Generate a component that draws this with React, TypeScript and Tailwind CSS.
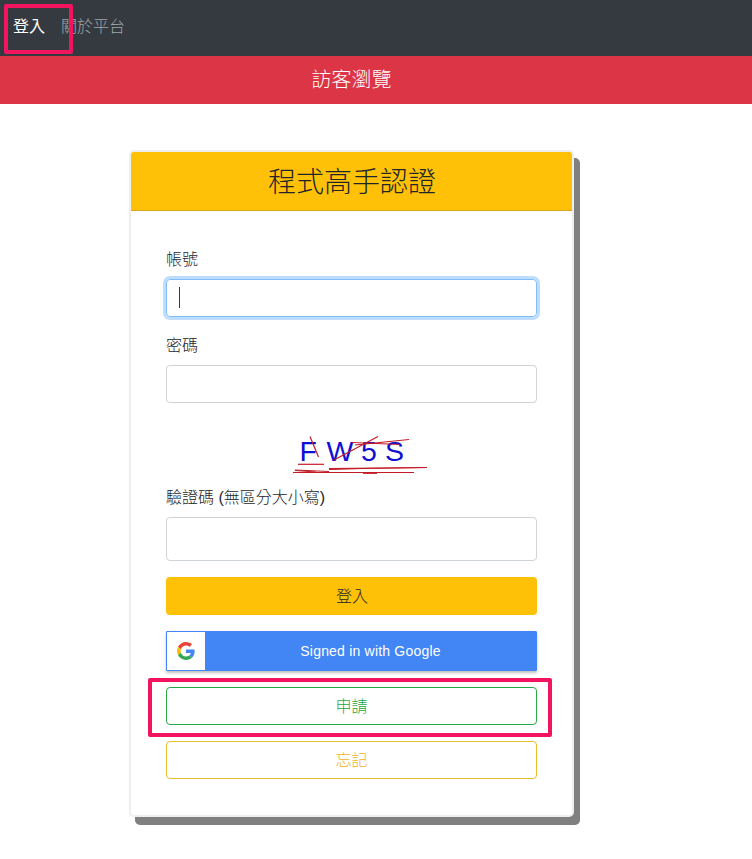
import type { ReactNode } from 'react';

function Field({ label, children }: { label: string; children: ReactNode }) {
  return (
    <div className="mb-4">
      <label className="mb-1.5 block h-[26px] pt-px text-base leading-6">{label}</label>
      {children}
    </div>
  );
}

function Captcha() {
  return (
    <svg className="block h-[66px] w-full" viewBox="0 0 371 66" fill="none">
      <g fill="#1010d4" fontSize="28.5" fontFamily="'Liberation Sans', Arial, sans-serif">
        <text x="133.5" y="42">F</text>
        <text x="160.5" y="42">W</text>
        <text x="195" y="42">5</text>
        <text x="219" y="42">S</text>
      </g>
      <g stroke="#c41c26" strokeWidth="1.2">
        <path d="M144 17.5 152.5 38" />
        <path d="M132 45.3H158" />
        <path d="M168 41 212 17.5" />
        <path d="M186 23.5 234 25.5" />
        <path d="M189 26 243 20.5" />
        <path d="M127 53.5H248" />
        <path d="M129 51 163 52.5" />
        <path d="M163 50.5 197 49.5 261 48.5" />
        <path d="M163 49.7 261 48.5" />
        <path d="M129 51.5 150 53" />
        <path d="M197 54.3H211" />
      </g>
    </svg>
  );
}

function GoogleLogo() {
  return (
    <svg className="size-[18px]" viewBox="0 0 48 48">
      <path fill="#EA4335" d="M24 9.5c3.54 0 6.71 1.22 9.21 3.6l6.85-6.85C35.9 2.38 30.47 0 24 0 14.62 0 6.51 5.38 2.56 13.22l7.98 6.19C12.43 13.72 17.74 9.5 24 9.5z" />
      <path fill="#4285F4" d="M46.98 24.55c0-1.57-.15-3.09-.38-4.55H24v9.02h12.94c-.58 2.96-2.26 5.48-4.78 7.18l7.73 6c4.51-4.18 7.09-10.36 7.09-17.65z" />
      <path fill="#FBBC05" d="M10.53 28.59c-.48-1.45-.76-2.99-.76-4.59s.27-3.14.76-4.59l-7.98-6.19C.92 16.46 0 20.12 0 24s.92 7.54 2.56 10.78l7.97-6.19z" />
      <path fill="#34A853" d="M24 48c6.48 0 11.93-2.13 15.89-5.81l-7.73-6c-2.15 1.45-4.92 2.3-8.16 2.3-6.26 0-11.57-4.22-13.47-9.91l-7.98 6.19C6.51 42.62 14.62 48 24 48z" />
    </svg>
  );
}

export default function App() {
  return (
    <div
      lang="zh-Hant"
      className="relative h-[859px] w-full overflow-hidden bg-white font-['Liberation_Sans','Noto_Sans_CJK_TC',sans-serif] font-light text-[#212529]"
    >
      <nav className="flex h-14 items-center gap-4 bg-[#343a40] px-[13px] pb-0.5 text-base">
        <a className="font-normal text-white">登入</a>
        <a className="text-[#a4a7a9]">關於平台</a>
      </nav>
      <div className="h-12 bg-[#dc3545] text-white">
        <div className="w-[703px] text-center text-xl leading-[48px]">訪客瀏覽</div>
      </div>

      <main className="flex w-[703px] justify-center pt-[46px]">
        <section className="w-[445px] rounded-[5px] border-2 border-[#eeeeef] bg-white shadow-[6px_8px_0_#808080]">
          <h3 className="h-[59px] rounded-t-[3px] border-b border-[#d8a51a] bg-[#ffc107] pl-px text-center text-[28px] leading-[62px]">
            程式高手認證
          </h3>
          <form className="px-[35px] pt-9 pb-9" onSubmit={(e) => e.preventDefault()}>
            <Field label="帳號">
              <div className="flex h-[38px] items-center rounded border border-[#80bdff] px-3 shadow-[0_0_0_3px_#bfdeff]">
                <span className="-mt-0.5 h-[21px] w-px bg-[#33383d]" />
              </div>
            </Field>
            <Field label="密碼">
              <input type="password" className="block h-[38px] w-full rounded border border-[#ced4da] px-3 outline-none" />
            </Field>
            <Captcha />
            <Field label="驗證碼 (無區分大小寫)">
              <input type="text" className="block h-11 w-full rounded border border-[#ced4da] px-3 outline-none" />
            </Field>
            <div className="flex flex-col gap-4">
              <button className="h-[38px] rounded bg-[#ffc107] pt-0.5 pl-px">登入</button>
              <button className="flex h-10 items-stretch rounded-[1px] border border-[#4285f4] bg-[#4285f4] font-normal text-white shadow-[0_2px_3px_rgba(0,0,0,0.25)]">
                <span className="flex w-[38px] items-center justify-center bg-white">
                  <GoogleLogo />
                </span>
                <span className="flex-1 self-center text-center text-sm tracking-[0.2px]">Signed in with Google</span>
              </button>
              <button className="h-[38px] rounded border border-[#28a745] pt-0.5 text-[#28a745]">申請</button>
              <button className="h-[38px] rounded border border-[#e9bd2c] pt-0.5 text-[#eeb41c]">忘記</button>
            </div>
          </form>
        </section>
      </main>

      {/* Highlight frames laid over the login link and the apply button */}
      <div className="pointer-events-none absolute top-1 left-1 h-[50px] w-[69px] rounded-[2px] border-4 border-[#f2145f]" />
      <div className="pointer-events-none absolute top-[678px] left-[148px] h-[59px] w-[404px] rounded-[2px] border-4 border-[#f2145f]" />
    </div>
  );
}
